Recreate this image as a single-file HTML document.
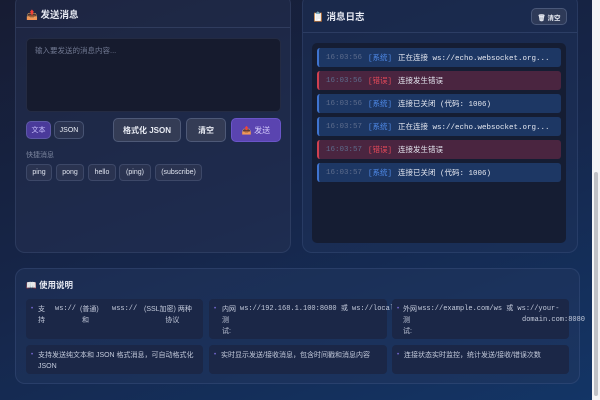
<!DOCTYPE html>
<html><head><meta charset="utf-8"><style>
*{box-sizing:border-box;margin:0;padding:0}
body{width:600px;height:400px;overflow:hidden;position:relative;font-family:"Liberation Sans","Noto Sans CJK SC",sans-serif;background:linear-gradient(160deg,#171c33 0%,#16264a 50%,#133566 100%);color:#e6e9f2}
.abs{position:absolute}
.panel{position:absolute;border:1px solid rgba(120,140,190,.16);border-radius:10px;background:rgba(40,52,85,.45)}
.mono{font-family:"Liberation Mono","Noto Sans CJK SC",monospace}
.btn{position:absolute;border:1px solid rgba(140,160,200,.3);border-radius:5px;background:#343c55;font-size:8px;font-weight:bold;display:flex;align-items:center;justify-content:center;color:#e8ebf3}
.chip{position:absolute;top:164px;height:17px;border:1px solid rgba(140,160,200,.2);border-radius:4px;background:#2a3350;font-size:7px;display:flex;align-items:center;justify-content:center;color:#dfe3ee}
.log{position:absolute;left:317px;width:244px;height:19px;border-radius:3px;font-size:7.5px;display:flex;align-items:center;white-space:nowrap}
.sys{background:#1d3764;border-left:2px solid #3f74d0}
.err{background:#4a2540;border-left:2px solid #d04050}
.log .t{color:#5d6c8c;margin-left:7px;width:42px}
.log .k{width:30px}
.sys .k{color:#4f8ae8}.err .k{color:#e84a5a}
.card{position:absolute;background:#1b2747;border-radius:4px;font-size:7px;color:#c3cadb;padding:5px 6px 0 12px;line-height:11px}
.card:before{content:"•";position:absolute;left:5px;top:5px;color:#7a6bd8;font-size:6px}
.s{position:absolute;font-size:7px;color:#c3cadb;white-space:nowrap;line-height:11px}
</style></head><body>
<div class="panel" style="left:15px;top:-6px;width:276px;height:259px"></div>
<div class="abs" style="left:16px;top:27px;width:274px;border-top:1px solid rgba(120,140,190,.2)"></div>
<div class="abs" style="left:26px;top:7px;font-size:9.5px;font-weight:bold">📤 发送消息</div>
<div class="abs" style="left:26px;top:38px;width:255px;height:74px;background:#161b2e;border-radius:5px;border:1px solid rgba(120,140,190,.15);font-size:7.5px;color:#707891;padding:6px 8px">输入要发送的消息内容...</div>
<div class="btn" style="left:26px;top:121px;width:25px;height:18px;background:#4a3a9a;color:#c9c0ff;font-weight:normal;font-size:7px">文本</div>
<div class="btn" style="left:54px;top:121px;width:30px;height:18px;background:#2a3350;font-weight:normal;font-size:7px">JSON</div>
<div class="btn" style="left:113px;top:118px;width:68px;height:24px">格式化 JSON</div>
<div class="btn" style="left:186px;top:118px;width:40px;height:24px">清空</div>
<div class="btn" style="left:231px;top:118px;width:50px;height:24px;background:#5a44b0;border-color:#6a55c8;color:#d8d0ff;font-weight:normal">📤 发送</div>
<div class="abs" style="left:26px;top:150px;font-size:7px;color:#7e87a0">快捷消息</div>
<div class="chip" style="left:26px;width:26px">ping</div>
<div class="chip" style="left:56px;width:28px">pong</div>
<div class="chip" style="left:88px;width:28px">hello</div>
<div class="chip" style="left:119px;width:32px">(ping)</div>
<div class="chip" style="left:155px;width:47px">(subscribe)</div>

<div class="panel" style="left:302px;top:-6px;width:276px;height:259px;background:rgba(30,50,90,.5)"></div>
<div class="abs" style="left:303px;top:32px;width:274px;border-top:1px solid rgba(120,140,190,.2)"></div>
<div class="abs" style="left:312px;top:9px;font-size:9.5px;font-weight:bold">📋 消息日志</div>
<div class="btn" style="left:531px;top:8px;width:36px;height:17px;font-size:6.5px;background:#2e3a58">🗑 清空</div>
<div class="abs" style="left:312px;top:43px;width:254px;height:200px;background:#151d33;border-radius:5px"></div>
<div class="log sys mono" style="top:48px"><span class="t">16:03:56</span><span class="k">[系统]</span>正在连接 ws://echo.websocket.org...</div>
<div class="log err mono" style="top:71px"><span class="t">16:03:56</span><span class="k">[错误]</span>连接发生错误</div>
<div class="log sys mono" style="top:94px"><span class="t">16:03:56</span><span class="k">[系统]</span>连接已关闭 (代码: 1006)</div>
<div class="log sys mono" style="top:117px"><span class="t">16:03:57</span><span class="k">[系统]</span>正在连接 ws://echo.websocket.org...</div>
<div class="log err mono" style="top:140px"><span class="t">16:03:57</span><span class="k">[错误]</span>连接发生错误</div>
<div class="log sys mono" style="top:163px"><span class="t">16:03:57</span><span class="k">[系统]</span>连接已关闭 (代码: 1006)</div>

<div class="panel" style="left:15px;top:268px;width:565px;height:116px;background:rgba(35,55,95,.45)"></div>
<div class="abs" style="left:26px;top:279px;font-size:8.5px;font-weight:bold">📖 使用说明</div>
<div class="card" style="left:26px;top:299px;width:177px;height:40px"></div>
<div class="s" style="left:38px;top:304px">支<br>持</div>
<div class="s mono" style="left:55px;top:304px">ws://</div>
<div class="s" style="left:80px;top:304px">(普通)<br>&nbsp;和</div>
<div class="s mono" style="left:112px;top:304px">wss://</div>
<div class="s" style="left:144px;top:304px">(SSL加密) 两种<br>&nbsp;&nbsp;&nbsp;&nbsp;&nbsp;&nbsp;&nbsp;&nbsp;&nbsp;&nbsp;&nbsp;协议</div>
<div class="card" style="left:209px;top:299px;width:178px;height:40px"></div>
<div class="s" style="left:222px;top:304px">内网<br>测<br>试:</div>
<div class="s mono" style="left:240px;top:304px">ws://192.168.1.100:8080 或 ws://localhost:8080</div>
<div class="card" style="left:392px;top:299px;width:177px;height:40px"></div>
<div class="s" style="left:403px;top:304px">外网<br>测<br>试:</div>
<div class="s mono" style="left:418px;top:304px">wss://example.com/ws 或 ws://your-</div>
<div class="s mono" style="left:522px;top:315px">domain.com:8080</div>
<div class="card" style="left:26px;top:345px;width:177px;height:29px">支持发送纯文本和 JSON 格式消息，可自动格式化 JSON</div>
<div class="card" style="left:209px;top:345px;width:178px;height:29px">实时显示发送/接收消息，包含时间戳和消息内容</div>
<div class="card" style="left:392px;top:345px;width:177px;height:29px">连接状态实时监控，统计发送/接收/错误次数</div>

<div class="abs" style="left:592px;top:0;width:8px;height:400px;background:#f4f4f6"></div>
<div class="abs" style="left:594px;top:172px;width:4px;height:224px;background:#bfc1c6;border-radius:2px"></div>
</body></html>
